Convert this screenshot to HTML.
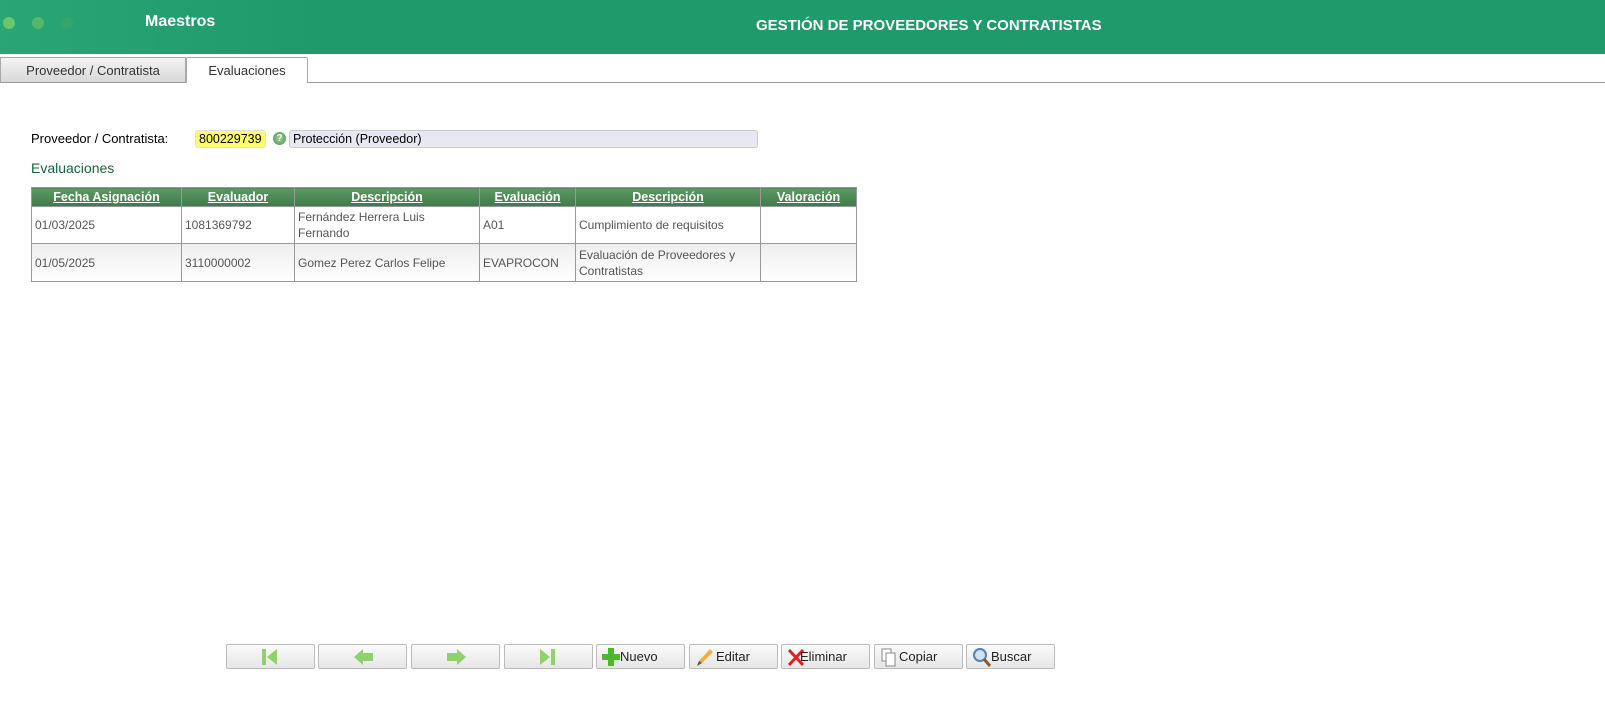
<!DOCTYPE html>
<html><head><meta charset="utf-8"><style>
body{margin:0;width:1605px;height:703px;background:#fff;font-family:"Liberation Sans",sans-serif;position:relative;overflow:hidden}
.hdr{position:absolute;left:0;top:0;width:1605px;height:54px;background:linear-gradient(90deg,#2aa575 0%,#1f9a6a 20%,#1f9a6a 100%)}
.dot{position:absolute;top:17px;width:12px;height:12px;border-radius:50%}
.hdr .t1{position:absolute;left:145px;top:13px;color:#fff;font-weight:bold;font-size:16px}
.hdr .t2{position:absolute;left:756px;top:17px;color:#fff;font-weight:bold;font-size:15px}
.tabline{position:absolute;left:0;top:82px;width:1605px;height:1px;background:#999}
.tab{position:absolute;top:57px;height:25px;font-size:13px;color:#333;text-align:center;line-height:25px;border:1px solid #aaa;border-bottom:none;box-sizing:border-box}
.lbl{position:absolute;font-size:13px}
table{position:absolute;left:31px;top:187px;border-collapse:collapse;font-size:12px;color:#555}
th{background:linear-gradient(#5b9a64,#3f7a48);color:#fff;text-decoration:underline;font-size:12.5px;height:18px;padding:0;border:1px solid #999}
td{border:1px solid #999;padding:0 3px;vertical-align:middle;line-height:16px}
.btn{position:absolute;top:644px;width:89px;height:25px;border:1px solid #bbb;border-radius:2px;box-sizing:border-box;background:linear-gradient(#fafafa,#e6e6e6);font-size:13px;color:#222;line-height:24px}
</style></head><body>
<div class="hdr">
<div class="dot" style="left:3px;background:#6cc56b"></div>
<div class="dot" style="left:32px;background:#56b866"></div>
<div class="dot" style="left:61px;background:#35a66a"></div>
<div class="t1">Maestros</div>
<div class="t2">GESTIÓN DE PROVEEDORES Y CONTRATISTAS</div>
</div>
<div class="tabline"></div>
<div class="tab" style="left:0;width:186px;background:linear-gradient(#f4f4f4,#d8d8d8)">Proveedor / Contratista</div>
<div class="tab" style="left:186px;width:122px;height:26px;background:#fff;border-radius:2px 2px 0 0">Evaluaciones</div>
<div class="lbl" style="left:31px;top:131px;color:#000">Proveedor / Contratista:</div>
<div class="lbl" style="left:195px;top:130px;background:#ffff66;border:1px solid #ddd;border-radius:3px;padding:1px 3px;font-size:12.5px">800229739</div>
<div style="position:absolute;left:273px;top:132px;width:13px;height:13px;border-radius:50%;background:radial-gradient(#9fd19f,#4b8f4b);color:#fff;font-size:10px;font-weight:bold;text-align:center;line-height:13px">?</div>
<div class="lbl" style="left:289px;top:130px;width:464px;height:16px;background:#e8e8f2;border:1px solid #ccc;border-radius:3px;padding:0 0 0 3px;font-size:12.5px;line-height:16px">Protección (Proveedor)</div>
<div class="lbl" style="left:31px;top:160px;color:#16653a;font-size:14px">Evaluaciones</div>
<table>
<tr><th style="width:149px">Fecha Asignación</th><th style="width:112px">Evaluador</th><th style="width:184px">Descripción</th><th style="width:95px">Evaluación</th><th style="width:184px">Descripción</th><th style="width:95px">Valoración</th></tr>
<tr style="height:37px;background:#fff"><td>01/03/2025</td><td>1081369792</td><td>Fernández Herrera Luis Fernando</td><td>A01</td><td>Cumplimiento de requisitos</td><td></td></tr>
<tr style="height:38px;background:linear-gradient(#eee,#fff)"><td>01/05/2025</td><td>3110000002</td><td>Gomez Perez Carlos Felipe</td><td>EVAPROCON</td><td>Evaluación de Proveedores y Contratistas</td><td></td></tr>
</table>
<div class="btn" style="left:226px"><svg width="89" height="24"><rect x="35" y="4" width="4" height="16" fill="#8fd16f"/><path d="M40 12 L50 4 V20Z" fill="#8fd16f"/></svg></div>
<div class="btn" style="left:318px"><svg width="89" height="24"><path d="M35 12 L44 4 V8 H54 V16 H44 V20Z" fill="#8fd16f"/></svg></div>
<div class="btn" style="left:411px"><svg width="89" height="24"><path d="M54 12 L45 4 V8 H35 V16 H45 V20Z" fill="#8fd16f"/></svg></div>
<div class="btn" style="left:504px"><svg width="89" height="24"><path d="M35 4 L45 12 L35 20Z" fill="#8fd16f"/><rect x="46" y="4" width="4" height="16" fill="#8fd16f"/></svg></div>
<div class="btn" style="left:596px"><svg width="20" height="24" style="position:absolute;left:4px"><path d="M7 3H13V9H19V15H13V21H7V15H1V9H7Z" fill="#4cb82e"/></svg><span style="position:absolute;left:23px">Nuevo</span></div>
<div class="btn" style="left:689px"><svg width="20" height="24" style="position:absolute;left:4px"><path d="M3 21 L5 16 L16 4 L19 7 L8 18Z" fill="#f0b040"/><path d="M3 21L5 16L8 18Z" fill="#555"/></svg><span style="position:absolute;left:26px">Editar</span></div>
<div class="btn" style="left:781px"><svg width="20" height="24" style="position:absolute;left:4px"><path d="M3 5L17 20M17 5L3 20" stroke="#e02020" stroke-width="3"/></svg><span style="position:absolute;left:18px">Eliminar</span></div>
<div class="btn" style="left:874px"><svg width="20" height="24" style="position:absolute;left:4px"><rect x="3" y="4" width="9" height="12" fill="#fff" stroke="#888"/><rect x="7" y="8" width="9" height="13" fill="#fff" stroke="#888"/></svg><span style="position:absolute;left:24px">Copiar</span></div>
<div class="btn" style="left:966px"><svg width="20" height="24" style="position:absolute;left:4px"><circle cx="9" cy="10" r="6" fill="#cfe3f7" stroke="#5a7fa8" stroke-width="2"/><path d="M13 14L19 21" stroke="#8a5a2a" stroke-width="3"/></svg><span style="position:absolute;left:24px">Buscar</span></div>
</body></html>
